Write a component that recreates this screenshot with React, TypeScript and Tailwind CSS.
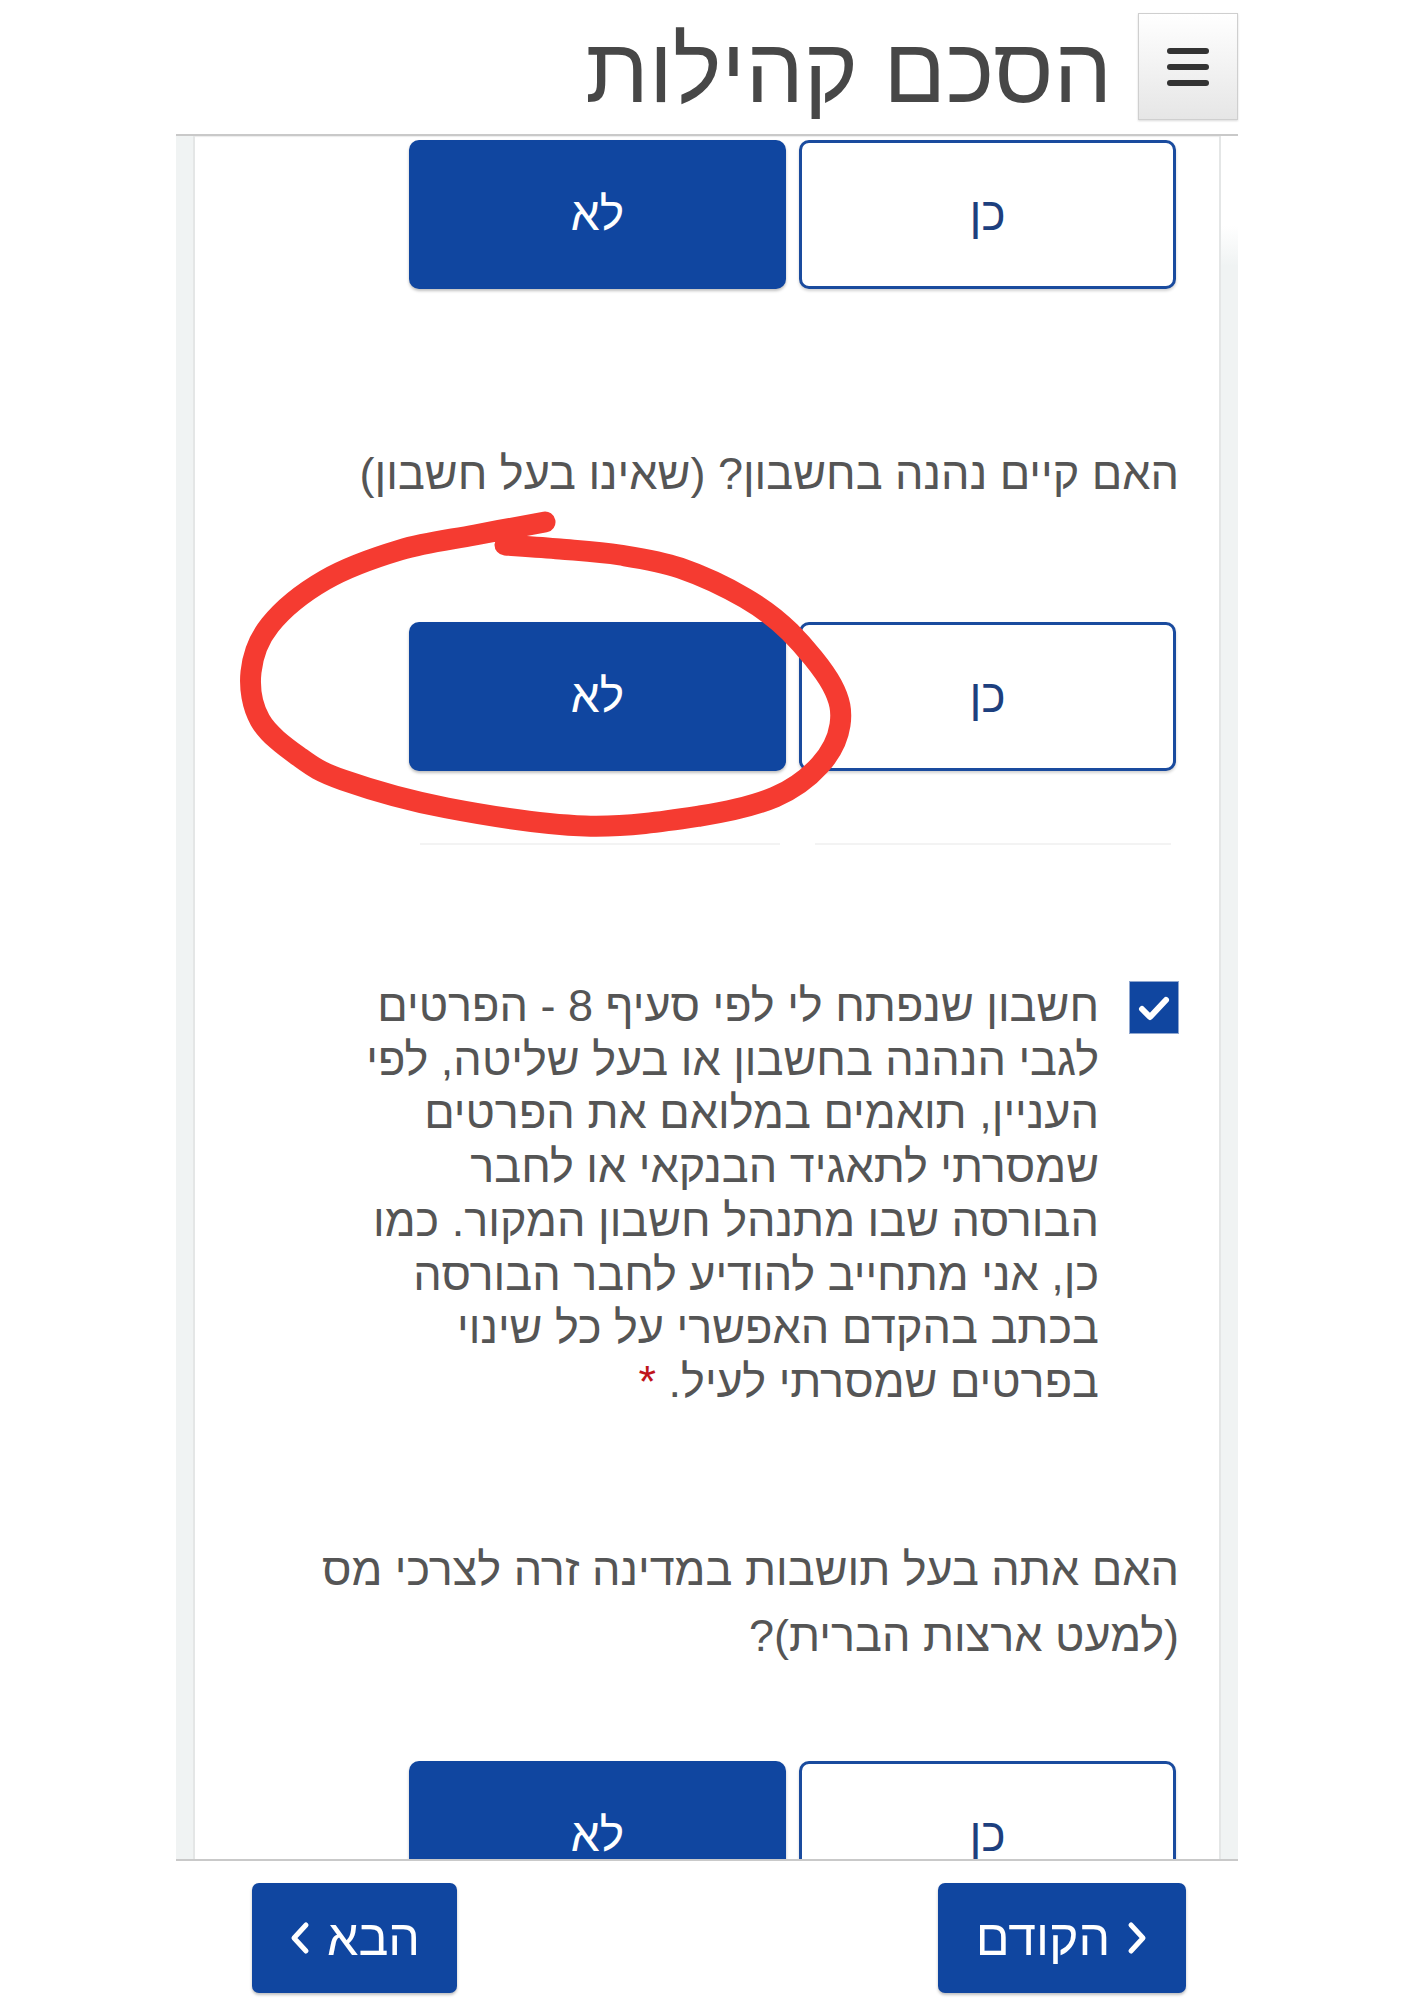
import React from "react";

type Pt = [number, number];

// hand-drawn red loop around the selected "לא" button
const loop: Pt[] = [
  [545, 522], [475, 535], [400, 550], [325, 580], [270, 625], [251, 672],
  [260, 720], [298, 756], [343, 780], [447, 808], [585, 826], [700, 816],
  [775, 797], [820, 765], [840, 725], [832, 685], [790, 632], [745, 598],
  [680, 568], [620, 555], [560, 549], [505, 545],
];

function smoothPath(pts: Pt[]) {
  let d = `M ${pts[0][0]} ${pts[0][1]}`;
  for (let i = 0; i < pts.length - 1; i++) {
    const p0 = pts[i - 1] ?? pts[i];
    const p1 = pts[i];
    const p2 = pts[i + 1];
    const p3 = pts[i + 2] ?? p2;
    const c1 = [p1[0] + (p2[0] - p0[0]) / 6, p1[1] + (p2[1] - p0[1]) / 6];
    const c2 = [p2[0] - (p3[0] - p1[0]) / 6, p2[1] - (p3[1] - p1[1]) / 6];
    d += ` C ${c1[0]} ${c1[1]}, ${c2[0]} ${c2[1]}, ${p2[0]} ${p2[1]}`;
  }
  return d;
}

const terms = [
  "חשבון שנפתח לי לפי סעיף 8 - הפרטים",
  "לגבי הנהנה בחשבון או בעל שליטה, לפי",
  "העניין, תואמים במלואם את הפרטים",
  "שמסרתי לתאגיד הבנקאי או לחבר",
  "הבורסה שבו מתנהל חשבון המקור. כמו",
  "כן, אני מתחייב להודיע לחבר הבורסה",
  "בכתב בהקדם האפשרי על כל שינוי",
];

function YesNo() {
  return (
    <div className="flex gap-[13px] pr-[43px]">
      <button className="w-[377px] h-[149px] rounded-[10px] border-[3px] border-[#1a4b9e] bg-white text-[#1d3f7e] text-[46px] shadow-[0_2px_3px_rgba(0,0,0,0.18)]">
        כן
      </button>
      <button className="w-[377px] h-[149px] rounded-[10px] bg-[#1046a0] text-white text-[46px] shadow-[0_2px_3px_rgba(0,0,0,0.25)]">
        לא
      </button>
    </div>
  );
}

function Chevron({ dir }: { dir: "left" | "right" }) {
  return (
    <svg width="22" height="34" viewBox="0 0 22 34" fill="none">
      <path
        d={dir === "right" ? "M5 4 L17 17 L5 30" : "M17 4 L5 17 L17 30"}
        stroke="white"
        strokeWidth="5"
        strokeLinecap="round"
        strokeLinejoin="round"
      />
    </svg>
  );
}

export default function App() {
  return (
    <div
      dir="rtl"
      className="relative w-[1414px] h-[2000px] overflow-hidden bg-white font-['Liberation_Sans',Arial,sans-serif]"
    >
      <div className="mx-auto w-[1062px] flex flex-col">
        {/* Header */}
        <div className="h-[134px] flex items-start gap-[26px]">
          <button className="mt-[13px] w-[100px] h-[107px] border border-[#cfcfcf] bg-gradient-to-b from-white to-[#e6e6e6] flex flex-col items-center justify-center gap-[10px] shadow-[0_1px_2px_rgba(0,0,0,0.15)]">
            <span className="block w-[42px] h-[6px] rounded-full bg-[#333]" />
            <span className="block w-[42px] h-[6px] rounded-full bg-[#333]" />
            <span className="block w-[42px] h-[6px] rounded-full bg-[#333]" />
          </button>
          <h1 className="mt-[18px] text-[92px] leading-[104px] text-[#474747] font-normal">הסכם קהילות</h1>
        </div>
        <div className="h-[2px] bg-[#c9c9c9] shadow-[0_1px_1px_rgba(0,0,0,0.08)]" />

        {/* Scrolled form */}
        <div className="h-[1723px] overflow-hidden flex">
          <div className="w-[19px] bg-[linear-gradient(to_bottom,#ffffff_0px,#ffffff_90px,#f0f3f3_130px)] border-l-2 border-[#e4e6e6]" />
          <div className="flex-1 flex flex-col">
            <div className="mt-[4px]">
              <YesNo />
            </div>

            <p className="mt-[155px] pr-[40px] pl-[45px] text-[45px] leading-[60px] text-[#555]">
              האם קיים נהנה בחשבון? (שאינו בעל חשבון)
            </p>

            <div className="mt-[118px]">
              <YesNo />
            </div>
            <div className="mt-[72px] flex gap-[35px] pr-[48px]">
              <div className="w-[356px] h-[2px] bg-[#f3f3f3]" />
              <div className="w-[360px] h-[2px] bg-[#f3f3f3]" />
            </div>

            <div className="mt-[134px] flex items-start gap-[30px] pr-[40px]">
              <div className="mt-[2px] w-[50px] h-[53px] shrink-0 bg-[#1046a0] border border-[#8ea6cf] flex items-center justify-center">
                <svg width="34" height="30" viewBox="0 0 34 30" fill="none">
                  <path d="M5 16 L13 24 L29 7" stroke="white" strokeWidth="6" strokeLinecap="round" strokeLinejoin="round" />
                </svg>
              </div>
              <p className="w-[800px] text-[45px] leading-[53.7px] text-[#555]">
                {terms.map((line) => (
                  <React.Fragment key={line}>
                    {line}
                    <br />
                  </React.Fragment>
                ))}
                בפרטים שמסרתי לעיל. <span className="text-[#c0141b]">*</span>
              </p>
            </div>

            <p className="mt-[128px] pr-[40px] pl-[45px] text-[45px] leading-[66px] text-[#555]">
              האם אתה בעל תושבות במדינה זרה לצרכי מס (למעט ארצות הברית)?
            </p>

            <div className="mt-[92px]">
              <YesNo />
            </div>
          </div>
          <div className="w-[19px] bg-[#f0f3f3] border-r-2 border-[#e4e6e6]" />
        </div>
        <div className="h-[2px] bg-[#c9c9c9]" />

        {/* Footer nav */}
        <div className="h-[140px] flex items-start justify-between pr-[52px] pl-[76px] pt-[22px]">
          <button className="h-[110px] w-[248px] rounded-[7px] bg-[#1046a0] text-white text-[50px] flex items-center justify-center gap-[16px] shadow-[0_2px_3px_rgba(0,0,0,0.25)]">
            <Chevron dir="right" />
            <span>הקודם</span>
          </button>
          <button className="h-[110px] w-[205px] rounded-[7px] bg-[#1046a0] text-white text-[50px] flex items-center justify-center gap-[16px] shadow-[0_2px_3px_rgba(0,0,0,0.25)]">
            <span>הבא</span>
            <Chevron dir="left" />
          </button>
        </div>
      </div>

      {/* annotation overlay */}
      <svg
        className="absolute inset-0 pointer-events-none"
        width="1414"
        height="2000"
        viewBox="0 0 1414 2000"
        fill="none"
      >
        <path d={smoothPath(loop)} stroke="#f53b31" strokeWidth="21" strokeLinecap="round" strokeLinejoin="round" />
      </svg>
    </div>
  );
}
